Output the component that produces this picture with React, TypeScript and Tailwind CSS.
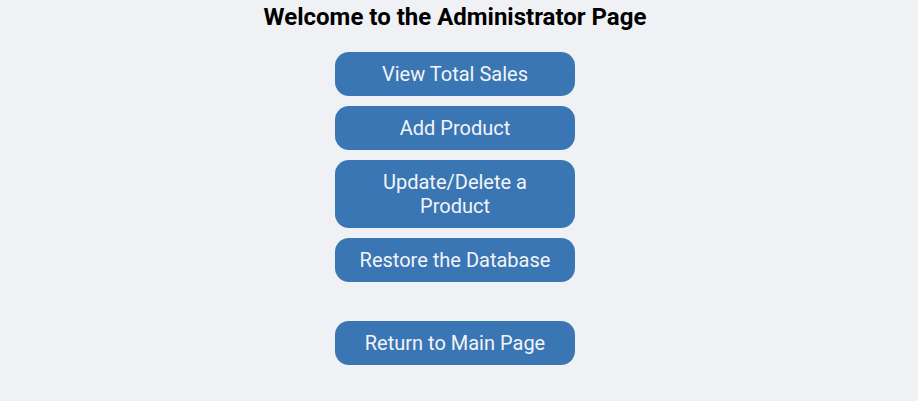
import React from "react";

const Btn = ({ children, className = "" }: { children: React.ReactNode; className?: string }) => (
  <button
    className={`w-[240px] rounded-[14px] bg-[#3a75b4] px-4 py-[10px] text-center text-[20px] leading-[24px] text-[#f2f4f8] ${className}`}
  >
    {children}
  </button>
);

export default function App() {
  return (
    <div
      className="min-h-[401px] w-full bg-[#f0f1f5]"
      style={{ fontFamily: "Roboto, 'Liberation Sans', sans-serif" }}
    >
      <div className="flex w-[910px] flex-col items-center pt-[3px]">
        <h1 className="text-[24px] font-bold leading-[28px] text-black">Welcome to the Administrator Page</h1>
        <div className="mt-[21px] flex flex-col items-center gap-[10px]">
          <Btn>View Total Sales</Btn>
          <Btn>Add Product</Btn>
          <Btn>Update/Delete a Product</Btn>
          <Btn>Restore the Database</Btn>
          <Btn className="mt-[29px]">Return to Main Page</Btn>
        </div>
      </div>
    </div>
  );
}
